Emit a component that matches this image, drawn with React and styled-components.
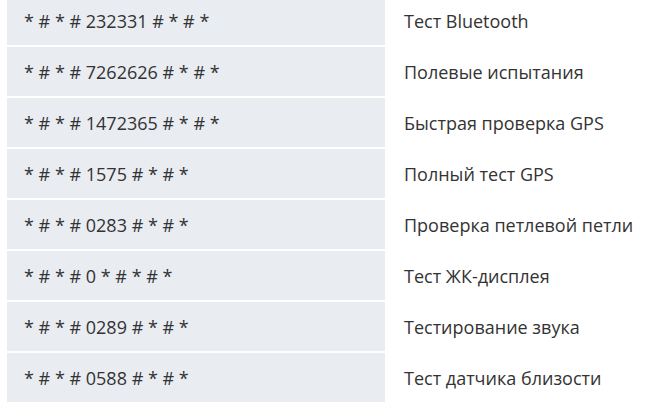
import React from 'react';
import styled, { createGlobalStyle } from 'styled-components';

const GlobalStyle = createGlobalStyle`
  html, body {
    margin: 0;
    padding: 0;
    background: #ffffff;
    overflow: hidden;
  }
`;

const codes = [
  ['* # * # 232331 # * # *', 'Тест Bluetooth'],
  ['* # * # 7262626 # * # *', 'Полевые испытания'],
  ['* # * # 1472365 # * # *', 'Быстрая проверка GPS'],
  ['* # * # 1575 # * # *', 'Полный тест GPS'],
  ['* # * # 0283 # * # *', 'Проверка петлевой петли'],
  ['* # * # 0 * # * # *', 'Тест ЖК-дисплея'],
  ['* # * # 0289 # * # *', 'Тестирование звука'],
  ['* # * # 0588 # * # *', 'Тест датчика близости'],
];

const Table = styled.div`
  display: grid;
  grid-template-columns: 378px 1fr;
  grid-auto-rows: 49px;
  row-gap: 2px;
  column-gap: 2px;
  margin: -4px 0 0 7px;
  font-family: 'Open Sans', 'Liberation Sans', sans-serif;
  font-size: 18px;
  color: #333333;
`;

const Cell = styled.div`
  display: flex;
  align-items: center;
  padding-left: 17px;
  background: ${(props) => (props.shaded ? '#e9ecf1' : '#ffffff')};
  white-space: nowrap;
`;

export default function App() {
  return (
    <>
      <GlobalStyle />
      <Table>
        {codes.map(([code, name]) => (
          <React.Fragment key={code}>
            <Cell shaded>{code}</Cell>
            <Cell>{name}</Cell>
          </React.Fragment>
        ))}
      </Table>
    </>
  );
}
